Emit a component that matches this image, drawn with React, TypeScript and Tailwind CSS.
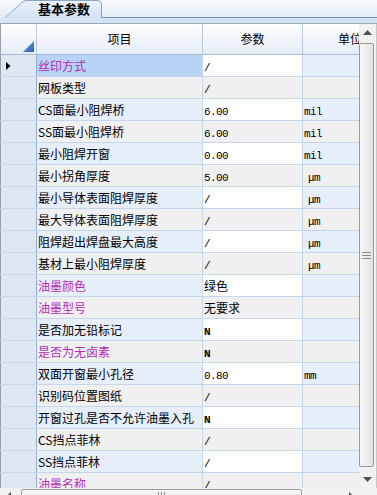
import React from "react"

type Row = { name: string; value: string; unit?: string; pink?: boolean }

const rows: Row[] = [
  { name: "丝印方式", value: "/", pink: true },
  { name: "网板类型", value: "/" },
  { name: "CS面最小阻焊桥", value: "6.00", unit: "mil" },
  { name: "SS面最小阻焊桥", value: "6.00", unit: "mil" },
  { name: "最小阻焊开窗", value: "0.00", unit: "mil" },
  { name: "最小拐角厚度", value: "5.00", unit: "μm" },
  { name: "最小导体表面阻焊厚度", value: "/", unit: "μm" },
  { name: "最大导体表面阻焊厚度", value: "/", unit: "μm" },
  { name: "阻焊超出焊盘最大高度", value: "/", unit: "μm" },
  { name: "基材上最小阻焊厚度", value: "/", unit: "μm" },
  { name: "油墨颜色", value: "绿色", pink: true },
  { name: "油墨型号", value: "无要求", pink: true },
  { name: "是否加无铅标记", value: "N" },
  { name: "是否为无卤素", value: "N", pink: true },
  { name: "双面开窗最小孔径", value: "0.80", unit: "mm" },
  { name: "识别码位置图纸", value: "/" },
  { name: "开窗过孔是否不允许油墨入孔", value: "N" },
  { name: "CS挡点菲林", value: "/" },
  { name: "SS挡点菲林", value: "/" },
  { name: "油墨名称", value: "/", pink: true },
]

const cjk = { fontFamily: '"Noto Sans CJK SC", "Liberation Sans", sans-serif' }
const mono = { fontFamily: '"Liberation Mono", "DejaVu Sans Mono", monospace' }

function Value({ text }: { text: string }) {
  const latin = /^[0-9./N]+$/.test(text)
  if (!latin) return <span style={cjk}>{text}</span>
  return (
    <span style={mono} className={`text-[11px] tracking-[-0.6px] ${text === "N" ? "font-bold" : ""}`}>
      {text}
    </span>
  )
}

function Unit({ text }: { text?: string }) {
  if (!text) return null
  return (
    <span style={mono} className={`text-[11px] tracking-[-0.6px] ${text === "μm" ? "ml-[4px]" : ""}`}>
      {text}
    </span>
  )
}

export default function App() {
  return (
    <div className="w-[377px] h-[495px] overflow-hidden bg-white" style={cjk}>
      <div className="h-[505px] flex flex-col">
        {/* tab strip */}
        <div className="h-[18px] flex items-end bg-gradient-to-b from-[#f8fafd] to-[#e2eaf6] shrink-0">
          <div className="relative w-[102px] h-[18px] shrink-0">
            <svg width="102" height="18" className="absolute inset-0">
              <defs>
                <linearGradient id="tabfill" x1="0" y1="0" x2="0" y2="1">
                  <stop offset="0" stopColor="#eef3fb" />
                  <stop offset="1" stopColor="#d3e1f4" />
                </linearGradient>
              </defs>
              <path d="M5,18 L23,1.5 Q24.5,0.5 27,0.5 L98,0.5 Q101.5,0.5 101.5,4 L101.5,18 Z" fill="url(#tabfill)" />
              <path d="M5,18 L23,1.5 Q24.5,0.5 27,0.5 L98,0.5 Q101.5,0.5 101.5,4 L101.5,18" fill="none" stroke="#8ba6cb" />
            </svg>
            <div className="relative pl-[38px] pt-[1px] text-[13px] leading-[16px] font-bold text-black">基本参数</div>
          </div>
          <div className="flex-1 h-full border-b border-[#6f93c6]" />
        </div>
        <div className="h-[5px] bg-[#d6e3f5] shrink-0" />

        {/* grid body */}
        <div className="h-[465px] flex border-t border-[#98a7bc] shrink-0">
          <div className="w-[359px] overflow-hidden">
            <div className="w-[400px]">
              {/* header */}
              <div className="flex h-[31px] border-b border-[#a9bdd8] bg-gradient-to-b from-[#fdfeff] to-[#e6edf7] text-[12px] text-black">
                <div className="w-[37px] border-l border-[#a0a0a0] border-r border-r-[#b8c8de] flex items-end justify-end pr-[2px] pb-[2px]">
                  <svg width="11" height="11">
                    <defs>
                      <linearGradient id="tri" x1="0" y1="0" x2="1" y2="1">
                        <stop offset="0" stopColor="#6d9be0" />
                        <stop offset="1" stopColor="#2d5fbf" />
                      </linearGradient>
                    </defs>
                    <path d="M0,11 L11,0 L11,11 Z" fill="url(#tri)" />
                  </svg>
                </div>
                <div className="w-[166px] border-r border-[#b8c8de] flex items-center justify-center">项目</div>
                <div className="w-[100px] border-r border-[#b8c8de] flex items-center justify-center">参数</div>
                <div className="w-[94px] flex items-center justify-center">单位</div>
              </div>

              {rows.map((r, i) => {
                const odd = i % 2 === 0
                const itemBg = i === 0 ? "bg-[#b7d3f5]" : odd ? "bg-[#e6eefa]" : "bg-[#f0f0f0]"
                const valBg = odd ? "bg-white" : "bg-[#f0f0f0]"
                const unitBg = odd ? "bg-[#e6eefa]" : "bg-[#f0f0f0]"
                return (
                  <div key={i} className="flex h-[22px] border-b border-[#c6d6ec] text-[12px] leading-[22px] text-black">
                    <div className="w-[37px] border-l border-[#a0a0a0] border-r border-r-[#94afd3] bg-[#dfe7f3] flex items-center pl-[5px]">
                      {i === 0 && (
                        <svg width="5" height="8">
                          <path d="M0,0 L4.5,4 L0,8 Z" fill="#000" />
                        </svg>
                      )}
                    </div>
                    <div
                      className={`w-[166px] border-r border-[#c6d6ec] pl-[1px] whitespace-nowrap overflow-hidden ${itemBg} ${r.pink ? "text-[#b12fb4]" : ""}`}
                    >
                      {r.name}
                    </div>
                    <div className={`w-[100px] border-r border-[#c6d6ec] pl-[1px] whitespace-nowrap overflow-hidden ${valBg}`}>
                      <Value text={r.value} />
                    </div>
                    <div className={`w-[94px] pl-[1px] whitespace-nowrap overflow-hidden ${unitBg}`}>
                      <Unit text={r.unit} />
                    </div>
                  </div>
                )
              })}
            </div>
          </div>

          {/* vertical scrollbar */}
          <div className="w-[18px] bg-[#f1f1f1] flex flex-col border-r border-[#c8c8c8]">
            <div className="h-[17px] flex items-center justify-center">
              <svg width="9" height="5">
                <path d="M0,5 L4.5,0 L9,5 Z" fill="#4d4d4d" />
              </svg>
            </div>
            <div className="flex-1 flex mt-[2px] mb-[4px]">
              <div className="w-[15px] rounded-[2px] border border-[#9a9a9a] bg-gradient-to-r from-[#f7f7f7] to-[#e3e3e3] flex items-center justify-center">
                <div className="flex flex-col gap-[2px]">
                  <div className="w-[9px] h-[1px] bg-[#8a8a8a]" />
                  <div className="w-[9px] h-[1px] bg-[#8a8a8a]" />
                  <div className="w-[9px] h-[1px] bg-[#8a8a8a]" />
                </div>
              </div>
            </div>
            <div className="h-[17px] flex items-center justify-center">
              <svg width="9" height="5">
                <path d="M0,0 L4.5,5 L9,0 Z" fill="#4d4d4d" />
              </svg>
            </div>
          </div>
        </div>

        {/* horizontal scrollbar */}
        <div className="h-[17px] flex bg-[#f1f1f1] shrink-0">
          <div className="w-[17px] flex items-center justify-center">
            <svg width="5" height="9">
              <path d="M5,0 L0,4.5 L5,9 Z" fill="#4d4d4d" />
            </svg>
          </div>
          <div className="w-[326px] flex pt-[1px]">
            <div className="ml-[4px] w-[281px] h-[15px] rounded-[2px] border border-[#9a9a9a] bg-gradient-to-b from-[#f7f7f7] to-[#e3e3e3] flex items-center justify-center">
              <div className="flex gap-[2px]">
                <div className="w-[1px] h-[9px] bg-[#8a8a8a]" />
                <div className="w-[1px] h-[9px] bg-[#8a8a8a]" />
                <div className="w-[1px] h-[9px] bg-[#8a8a8a]" />
              </div>
            </div>
          </div>
          <div className="w-[17px] flex items-center justify-center">
            <svg width="5" height="9">
              <path d="M0,0 L5,4.5 L0,9 Z" fill="#4d4d4d" />
            </svg>
          </div>
          <div className="w-[17px] bg-[#f1f1f1]" />
        </div>
      </div>
    </div>
  )
}
